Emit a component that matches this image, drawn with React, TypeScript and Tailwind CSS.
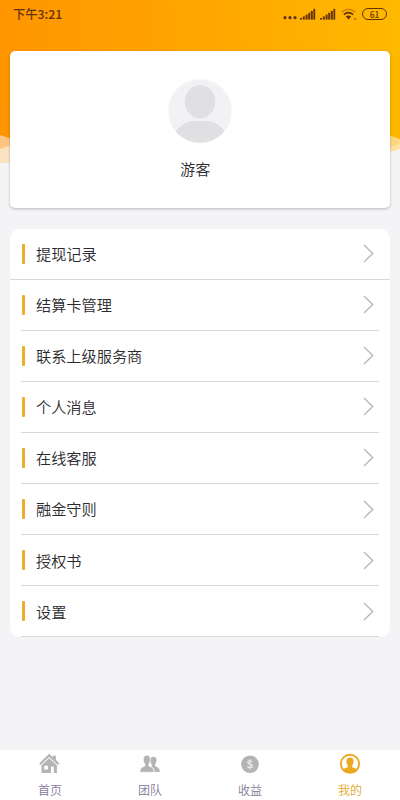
import clsx from "clsx";

const menu = ["提现记录", "结算卡管理", "联系上级服务商", "个人消息", "在线客服", "融金守则", "授权书", "设置"];

function HeaderWave() {
  return (
    <svg viewBox="0 0 400 164" className="col-start-1 row-start-1 h-[164px] w-full">
      <defs>
        <linearGradient id="sun" gradientUnits="userSpaceOnUse" x1="0" y1="40" x2="400" y2="0">
          <stop offset="0" stopColor="#ff9500" />
          <stop offset="0.5" stopColor="#ffa600" />
          <stop offset="1" stopColor="#ffb900" />
        </linearGradient>
      </defs>
      <path d="M0 140 L12 142 V163 H0Z" fill="#fbe3c2" />
      <path d="M0 134 L12 138 V145 L0 149Z" fill="#fdc583" />
      <path d="M388 134 L400 140 V149 Q394 152 388 151Z" fill="#fde2a4" />
      <path d="M388 134 Q395 136 400 143 L388 149Z" fill="#fdd680" />
      <path d="M0 0 H400 V140 Q394 136 388 136 H12 V139 L0 135Z" fill="url(#sun)" />
    </svg>
  );
}

function Signal() {
  return (
    <svg viewBox="0 0 16 12" className="h-3 w-4" fill="#65330a">
      <rect x="0" y="10" width="2" height="1.6" />
      <rect x="2.8" y="8.4" width="2" height="3.2" />
      <rect x="5.6" y="6.6" width="2" height="5" />
      <rect x="8.2" y="4.8" width="2" height="6.8" />
      <rect x="10.8" y="2.9" width="2" height="8.7" />
      <rect x="13.4" y="0.8" width="1.8" height="10.8" />
    </svg>
  );
}

function StatusBar() {
  return (
    <div className="col-start-1 row-start-1 flex h-7 items-center justify-between pr-[13px] pl-[13px] text-[#65330a]">
      <span className="pt-px text-[12.3px] leading-none font-medium">下午3:21</span>
      <div className="flex items-center">
        <svg viewBox="0 0 14 12" className="mr-[3px] h-3 w-[14px]" fill="currentColor">
          <circle cx="2" cy="9.7" r="1.6" />
          <circle cx="7" cy="9.7" r="1.6" />
          <circle cx="12" cy="9.7" r="1.6" />
        </svg>
        <Signal />
        <span className="w-1" />
        <Signal />
        <svg viewBox="0 0 16 12" className="mr-[5px] ml-[5px] h-3 w-4" fill="none" stroke="currentColor" strokeWidth="1.6">
          <path d="M0.7 4.2 Q7.5 -1.6 14.3 4.2" stroke="#c77d0a" strokeWidth="1.3" />
          <path d="M2.8 6.6 Q7.5 2.6 12.2 6.6" />
          <path d="M4.8 8.4 Q7.5 6.6 10.2 8.4 L7.5 11.6Z" fill="currentColor" stroke="none" />
          <circle cx="14.3" cy="11" r="1.2" fill="#c77d0a" stroke="none" />
        </svg>
        <span className="flex h-3 w-[25px] items-center justify-center rounded-full border border-[#65330a] text-[8.5px] leading-none font-medium">
          61
        </span>
      </div>
    </div>
  );
}

function Avatar() {
  return (
    <svg viewBox="0 0 64 64" className="size-16">
      <clipPath id="face">
        <circle cx="32" cy="32" r="31.8" />
      </clipPath>
      <g clipPath="url(#face)">
        <rect width="64" height="64" fill="#f2f1f3" />
        <ellipse cx="32" cy="22.8" rx="15.3" ry="16.6" fill="#e0dfe1" />
        <path d="M6 54 Q16 42.5 24 42 H41 Q50 43 58 54 V64 H6Z" fill="#e0dfe1" />
      </g>
    </svg>
  );
}

function MenuRow({ label, wide }: { label: string; wide: boolean }) {
  return (
    <li className={clsx("h-[51.1px]", !wide && "px-[11px]")}>
      <div className={clsx("flex h-full items-center border-b border-[#d9d8da]", wide ? "pr-4 pl-3" : "pr-[5px] pl-px")}>
        <span className="h-5 w-[3px] rounded-[1px] bg-[#edac30]" />
        <span className="ml-[10.6px] flex-1 text-[15.2px] leading-none font-[350] text-[#2b2a2e]">{label}</span>
        <svg viewBox="0 0 11 19" className="h-[19px] w-[11px]" fill="none" stroke="#b5b4b6" strokeWidth="1.3">
          <path d="M1 1 L9.7 9.5 L1 18" />
        </svg>
      </div>
    </li>
  );
}

const tabs = [
  {
    label: "首页",
    icon: (
      <svg viewBox="0 0 22 22" className="size-[22px]" fill="#b4b3b5">
        <path d="M10.2 0.8 L13.9 4.2 V2.8 H16.9 V7 L20.3 10.2 L19 12 L10.2 4 L1.5 12 L0.3 10.2Z" />
        <path
          fillRule="evenodd"
          d="M2.5 12.2 L10.2 5.2 L17.9 12.2 V20 H14.9 V13.6 H11.9 V20 H2.5Z M5.2 12.8 V16.6 H9 V12.8Z"
        />
      </svg>
    ),
  },
  {
    label: "团队",
    icon: (
      <svg viewBox="0 0 22 22" className="size-[22px]" fill="#b4b3b5">
        <path d="M14.2 3.7 C17 3.7 17.9 5.7 17.5 8 C17.2 9.8 16.6 10.8 16.1 11.3 V13.2 C18.6 14.2 20.8 14.8 20.9 19 H15.6 C15.5 16 14.5 14.8 12.7 13.8 V11.3 C11.7 10 11.2 8.2 11.3 6.5 C11.5 4.6 12.6 3.7 14.2 3.7Z" />
        <path
          d="M7.8 2.3 C10.6 2.3 11.8 4.5 11.3 7.3 C11 9.3 10.3 10.3 9.8 10.9 V13 C12.6 14.1 15 14.6 15.1 19.2 H0.9 C1 14.8 3.3 14.1 5.9 13 V10.9 C5.2 10.2 4.6 9 4.4 7.3 C4 4.4 5.1 2.3 7.8 2.3Z"
          stroke="#fff"
          strokeWidth="0.6"
        />
      </svg>
    ),
  },
  {
    label: "收益",
    icon: (
      <svg viewBox="0 0 22 22" className="size-[22px]">
        <circle cx="11" cy="11.2" r="8.8" fill="#b4b3b5" />
        <path
          d="M13.4 9 Q13 7.7 11 7.7 Q8.8 7.7 8.8 9.3 Q8.8 10.7 11 11.1 Q13.4 11.5 13.4 13.1 Q13.4 14.8 11 14.8 Q8.9 14.8 8.5 13.3 M11 6.2 V16.2"
          fill="none"
          stroke="#eeedef"
          strokeWidth="1.1"
        />
      </svg>
    ),
  },
  {
    label: "我的",
    active: true,
    icon: (
      <svg viewBox="0 0 22 22" className="size-[22px]">
        <circle cx="11" cy="10.8" r="9.1" fill="#fff" stroke="#eda91d" strokeWidth="1.9" />
        <path
          d="M11 4.6 C14.1 4.6 14.9 6.8 14.5 9.2 C14.3 10.7 13.7 11.7 13.2 12.3 V14.2 C15 15 16.9 15.2 18 16.7 C14.5 20.8 7.5 20.8 4 16.7 C5.1 15.2 7 15 8.8 14.2 V12.3 C8.3 11.7 7.7 10.7 7.5 9.2 C7.1 6.8 7.9 4.6 11 4.6Z"
          fill="#eda91d"
        />
      </svg>
    ),
  },
];

export default function App() {
  return (
    <div className="flex h-[800px] w-full flex-col overflow-hidden bg-[#f4f3f6] font-['Noto_Sans_CJK_SC',sans-serif]">
      <header className="grid h-[164px] shrink-0 items-start">
        <HeaderWave />
        <StatusBar />
      </header>

      <section className="z-10 mr-[10px] ml-[10.4px] -mt-[113px] flex h-[157px] shrink-0 flex-col items-center rounded-[5px] bg-white pt-7 shadow-[0_1px_3px_rgba(0,0,0,0.25)]">
        <Avatar />
        <p className="mt-[18px] mr-[10px] text-[15.2px] leading-none font-[350] text-[#2b2a2e]">游客</p>
      </section>

      <ul className="mr-[10px] ml-[10.4px] mt-[20.5px] rounded-[10px] bg-white">
        {menu.map((label, i) => (
          <MenuRow key={label} label={label} wide={i === 0} />
        ))}
      </ul>

      <nav className="mt-auto grid h-[50px] grid-cols-4 bg-white">
        {tabs.map((tab) => (
          <div key={tab.label} className="flex flex-col items-center pt-[3px]">
            {tab.icon}
            <span
              className={clsx(
                "mt-[9px] text-[12px] leading-none font-[350]",
                tab.active ? "text-[#e5a52c]" : "text-[#84799a]",
              )}
            >
              {tab.label}
            </span>
          </div>
        ))}
      </nav>
    </div>
  );
}
